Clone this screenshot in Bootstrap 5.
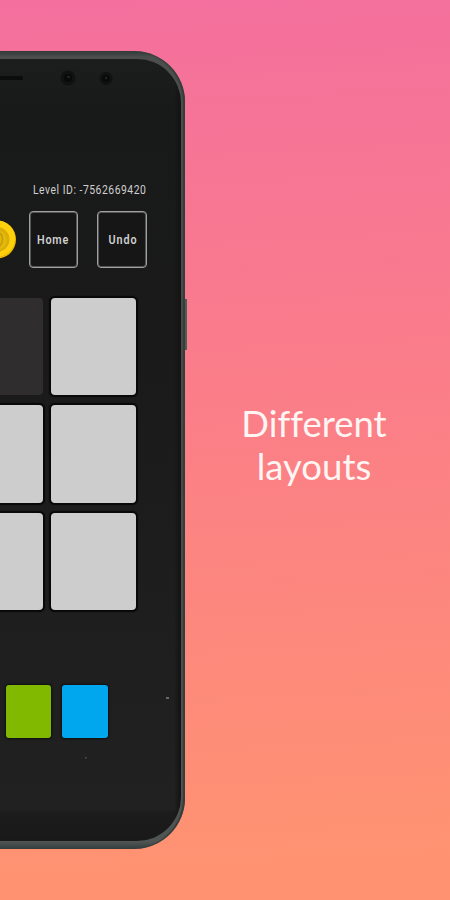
<!DOCTYPE html>
<html lang="en">
<head>
<meta charset="utf-8">
<meta name="viewport" content="width=device-width, initial-scale=1">
<title>Different layouts</title>
<link href="https://cdn.jsdelivr.net/npm/bootstrap@5.3.0/dist/css/bootstrap.min.css" rel="stylesheet">
<style>
  .promo { width: 450px; height: 900px; background: linear-gradient(177deg, #f46f9e 0%, #fb8086 50%, #ff9371 95%); }
  .phone { width: 185px; height: 798px; margin-top: 51px; border-radius: 0 51px 51px 0;
    background: linear-gradient(#333b39 0, #3d4241 3px, #4c4e4e 6px, #484a49 50%, #505453 791px, #303d3d 798px);
    padding: 8px 4px 8px 0; box-shadow: inset -2px 0 1px #343d39; }
  .face { border-radius: 0 44px 44px 0; overflow: hidden;
    background: linear-gradient(90deg, transparent 174px, #141414 180px), linear-gradient(#1c1e1e, #181919 50px, #1a1a1a 300px, #212121 750px, #1c1c1c 754px, #191919); }
  .power-key { width: 2px; height: 51px; margin: 248px -2px 0 0; background: #515c55; right: 0; top: 0; }
  .sensors { height: 122px; }
  .level { height: 30px; }
  .controls { height: 57px; }
  .tool { height: 57px; background: #161616; border: 1px solid #a0a0a0; box-shadow: inset 0 0 0 1px #555; border-radius: 4px; padding: 0; }
  .home { width: 49px; margin-left: 12.5px; }
  .undo { width: 50px; margin-left: 19.5px; }
  .board { width: 136px; gap: 10px 8.5px; margin-top: 29.5px; grid-template: repeat(3, 97.5px) / 42.5px 84.5px; }
  .tile { background: #cdcdcd; border-radius: 0 4px 4px 0; box-shadow: 0 0 1px 1.5px #080808; }
  .tile:nth-child(even) { border-radius: 4px; }
  .tile.spent { background: #302d2e; box-shadow: none; }
  .swatches { gap: 11px; margin: 74.5px 0 0 5.5px; }
  .swatch { width: 45.5px; height: 53px; border-radius: 3px; box-shadow: 0 0 2px 1px #101010; }
  .green { background: #80b900; }
  .blue { background: #00a7ee; }
  .caption { margin: 402px 0 0 50px; width: 158px; font: 400 36.5px/43px Lato, sans-serif; color: #fff5f3; font-variant-ligatures: none; }
  .label-text { font-family: Roboto, sans-serif; fill: #d0d0d0; }
</style>
</head>
<body class="m-0 overflow-hidden">
<main class="promo d-flex align-items-start overflow-hidden">
  <section class="phone position-relative flex-shrink-0">
    <div class="power-key position-absolute"></div>
    <div class="face h-100 d-flex flex-column">
      <svg class="sensors flex-shrink-0" width="180" height="122" viewBox="0 59 180 122">
        <path d="M0 78H23" stroke="#0b0c0c" stroke-width="4"/>
        <circle cx="68" cy="78" r="7.5" fill="#101111"/><circle cx="68" cy="78" r="4" fill="#080909"/><circle cx="68.5" cy="77" r="1.3" fill="#222627"/>
        <circle cx="106" cy="78.5" r="6.5" fill="#101111"/><circle cx="106" cy="78.5" r="3.5" fill="#080909"/><circle cx="106" cy="78" r="1.2" fill="#222627"/>
      </svg>
      <svg class="level flex-shrink-0" width="180" height="30" viewBox="0 181 180 30">
        <text class="label-text" transform="translate(33 193.7) scale(.83 1)" font-size="12.5" textLength="136" lengthAdjust="spacing">Level ID: -7562669420</text>
      </svg>
      <div class="controls d-flex flex-shrink-0">
        <svg width="16" height="57" viewBox="0 0 16 57">
          <circle cx="-3" cy="28.5" r="19" fill="#eab900"/><circle cx="-3" cy="27.5" r="18" fill="#ffd00b"/>
          <circle cx="-3" cy="28.5" r="12.5" fill="#d9ad0b"/><circle cx="-3" cy="29" r="10" fill="#e2b80a"/>
          <path d="M0 22Q5 28 0 35" fill="none" stroke="#c79a0b" stroke-width="1.5"/>
        </svg>
        <button class="tool home btn d-block" aria-label="Home"><svg class="d-block" width="46" height="54"><text class="label-text" transform="translate(7 31) scale(.8 1)" font-size="13.5" font-weight="600" textLength="39" lengthAdjust="spacing">Home</text></svg></button>
        <button class="tool undo btn d-block" aria-label="Undo"><svg class="d-block" width="47" height="54"><text class="label-text" transform="translate(10.5 31) scale(.8 1)" font-size="13.5" font-weight="600" textLength="35" lengthAdjust="spacing">Undo</text></svg></button>
      </div>
      <div class="board d-grid flex-shrink-0">
        <div class="tile spent"></div><div class="tile"></div>
        <div class="tile"></div><div class="tile"></div>
        <div class="tile"></div><div class="tile"></div>
      </div>
      <div class="swatches d-flex flex-shrink-0"><div class="swatch green"></div><div class="swatch blue"></div></div>
      <svg class="position-absolute top-0" width="180" height="798"><rect x="166" y="646" width="3" height="2" fill="#686868"/><rect x="85" y="706" width="1.5" height="1.5" fill="#555"/></svg>
    </div>
  </section>
  <h1 class="caption text-center flex-shrink-0">Different<br>layouts</h1>
</main>
<script src="https://cdn.jsdelivr.net/npm/bootstrap@5.3.0/dist/js/bootstrap.bundle.min.js"></script>
</body>
</html>
